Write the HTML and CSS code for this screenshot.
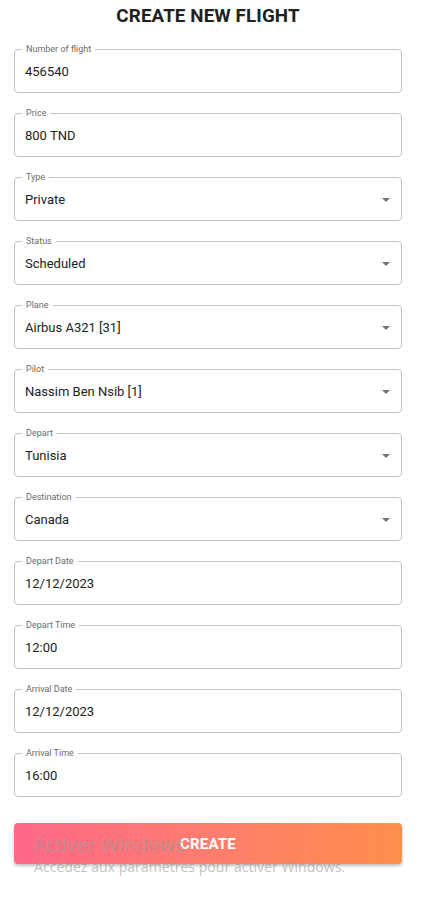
FILE: index.html
```html
<!DOCTYPE html>
<html>
<head>
<meta charset="utf-8">
<link rel="stylesheet" href="styles.css">
</head>
<body>
<main class="page">
  <h1 class="title">CREATE NEW FLIGHT</h1>
  <form class="form">
    <div class="field"><span class="label">Number of flight</span><span class="value">456540</span></div>
    <div class="field"><span class="label">Price</span><span class="value">800 TND</span></div>
    <div class="field select"><span class="label">Type</span><span class="value">Private</span><span class="arrow"></span></div>
    <div class="field select"><span class="label">Status</span><span class="value">Scheduled</span><span class="arrow"></span></div>
    <div class="field select"><span class="label">Plane</span><span class="value">Airbus A321 [31]</span><span class="arrow"></span></div>
    <div class="field select"><span class="label">Pilot</span><span class="value">Nassim Ben Nsib [1]</span><span class="arrow"></span></div>
    <div class="field select"><span class="label">Depart</span><span class="value">Tunisia</span><span class="arrow"></span></div>
    <div class="field select"><span class="label">Destination</span><span class="value">Canada</span><span class="arrow"></span></div>
    <div class="field"><span class="label">Depart Date</span><span class="value">12/12/2023</span></div>
    <div class="field"><span class="label">Depart Time</span><span class="value">12:00</span></div>
    <div class="field"><span class="label">Arrival Date</span><span class="value">12/12/2023</span></div>
    <div class="field"><span class="label">Arrival Time</span><span class="value">16:00</span></div>
    <button type="button" class="create">CREATE</button>
  </form>
</main>
<div class="watermark">
  <div class="wm-title">Activer Windows</div>
  <div class="wm-sub">Accédez aux paramètres pour activer Windows.</div>
</div>
</body>
</html>
```
FILE: styles.css
```css
html, body {
  margin: 0;
  padding: 0;
  background: #fff;
}
body {
  font-family: Roboto, "Liberation Sans", sans-serif;
  color: #222;
  width: 425px;
  height: 906px;
  position: relative;
  overflow: hidden;
}
.page {
  padding: 0 23px 0 14px;
}
.title {
  margin: 0;
  padding-top: 6px;
  height: 49px;
  box-sizing: border-box;
  text-align: center;
  font-size: 18.8px;
  font-weight: 700;
  line-height: 21px;
  color: #212121;
  letter-spacing: 0.1px;
}
.form {
  display: flex;
  flex-direction: column;
  gap: 20px;
}
.field {
  position: relative;
  height: 44px;
  box-sizing: border-box;
  border: 1px solid #c4c4c4;
  border-radius: 4px;
  display: flex;
  align-items: center;
  padding: 0 10px;
}
.label {
  position: absolute;
  left: 7px;
  top: -7px;
  padding: 0 4px;
  background: #fff;
  font-size: 9px;
  line-height: 12px;
  color: #6b6b6b;
}
.value {
  flex: 1;
  font-size: 13px;
  color: #222;
}
.arrow {
  width: 0;
  height: 0;
  border-left: 4px solid transparent;
  border-right: 4px solid transparent;
  border-top: 4px solid #757575;
  margin-right: 1px;
  margin-top: 1px;
}
.create {
  margin-top: 6px;
  height: 41px;
  border: none;
  border-radius: 4px;
  background: linear-gradient(90deg, #ff6889 0%, #ff7d6e 50%, #ff8e4b 100%);
  box-shadow: 0 2px 3px rgba(0,0,0,0.25);
  color: #fff;
  font-family: Roboto, "Liberation Sans", sans-serif;
  font-size: 15px;
  font-weight: 700;
  letter-spacing: 0.2px;
  padding: 0;
}
.watermark {
  position: absolute;
  left: 34px;
  top: 832px;
  color: rgba(150, 150, 150, 0.6);
  font-family: "Open Sans", "DejaVu Sans", sans-serif;
  pointer-events: none;
}
.wm-title {
  font-size: 19.5px;
  line-height: 26px;
}
.wm-sub {
  font-size: 14.1px;
  line-height: 18px;
}
```
